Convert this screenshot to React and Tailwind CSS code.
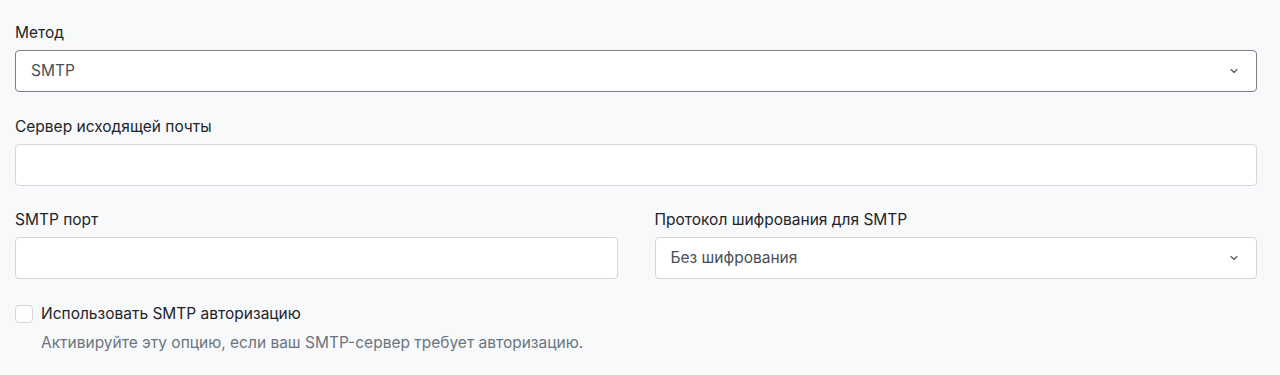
import React from "react";

const Chevron = () => (
  <svg width="12" height="12" viewBox="0 0 16 16" fill="none" className="absolute right-[16px] top-1/2 -translate-y-1/2">
    <path d="M4 6l4 4 4-4" stroke="#4b5563" strokeWidth="1.5" strokeLinecap="round" strokeLinejoin="round" />
  </svg>
);

export default function App() {
  return (
    <div className="min-h-[375px] bg-[#f8f9fb] px-[15px] pt-[22px] text-[15.5px] text-[#212529]" style={{ fontFamily: "Inter, 'Noto Sans', sans-serif" }}>
      <div className="w-[1242px]">
        <label className="block leading-[22px] mb-[6px]">Метод</label>
        <div className="relative h-[42px] rounded-[4px] border border-[#7b8088] bg-white flex items-center px-[15px] text-[#495057]">
          SMTP
          <Chevron />
        </div>

        <label className="block leading-[22px] mt-[24px] mb-[6px]">Сервер исходящей почты</label>
        <div className="h-[42px] rounded-[4px] border border-[#d3d6da] bg-white" />

        <div className="grid grid-cols-2 gap-x-[37px] mt-[23px]">
          <div>
            <label className="block leading-[22px] mb-[6px]">SMTP порт</label>
            <div className="h-[42px] rounded-[4px] border border-[#d3d6da] bg-white" />
          </div>
          <div>
            <label className="block leading-[22px] mb-[6px]">Протокол шифрования для SMTP</label>
            <div className="relative h-[42px] rounded-[4px] border border-[#d3d6da] bg-white flex items-center px-[15px] text-[#495057]">
              Без шифрования
              <Chevron />
            </div>
          </div>
        </div>

        <div className="flex items-center mt-[25px] h-[20px]">
          <div className="w-[18px] h-[18px] rounded-[4px] border border-[#d3d6da] bg-white" />
          <span className="ml-[8px] leading-[20px]">Использовать SMTP авторизацию</span>
        </div>
        <div className="ml-[26px] mt-[9px] leading-[20px] text-[#6c757d]">Активируйте эту опцию, если ваш SMTP-сервер требует авторизацию.</div>
      </div>
    </div>
  );
}
